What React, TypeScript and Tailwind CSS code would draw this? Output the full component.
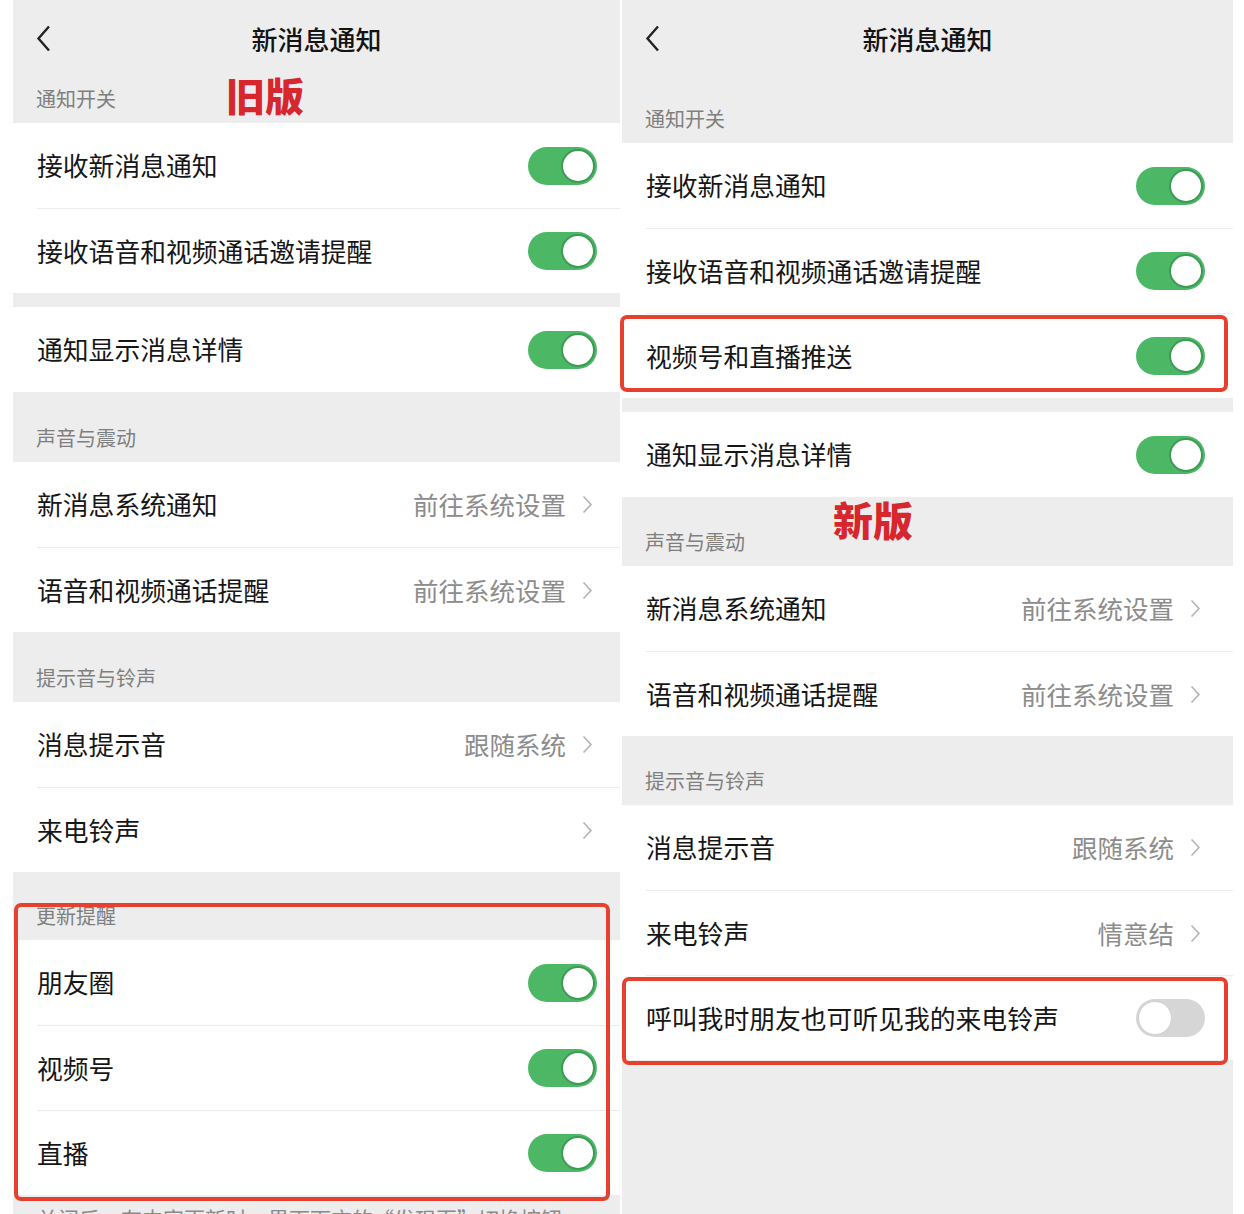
import React from "react";

type Item = {
  label: string;
  toggle?: boolean;
  on?: boolean;
  value?: string;
  arrow?: boolean;
};

type Section = {
  title?: string;
  bandClass: string;
  items: Item[];
};

const oldSections: Section[] = [
  {
    title: "通知开关",
    bandClass: "h-[43px]",
    items: [
      { label: "接收新消息通知", toggle: true, on: true },
      { label: "接收语音和视频通话邀请提醒", toggle: true, on: true },
    ],
  },
  {
    bandClass: "h-[14px]",
    items: [{ label: "通知显示消息详情", toggle: true, on: true }],
  },
  {
    title: "声音与震动",
    bandClass: "h-[70px]",
    items: [
      { label: "新消息系统通知", value: "前往系统设置", arrow: true },
      { label: "语音和视频通话提醒", value: "前往系统设置", arrow: true },
    ],
  },
  {
    title: "提示音与铃声",
    bandClass: "h-[70px]",
    items: [
      { label: "消息提示音", value: "跟随系统", arrow: true },
      { label: "来电铃声", arrow: true },
    ],
  },
  {
    title: "更新提醒",
    bandClass: "h-[68px]",
    items: [
      { label: "朋友圈", toggle: true, on: true },
      { label: "视频号", toggle: true, on: true },
      { label: "直播", toggle: true, on: true },
    ],
  },
];

const newSections: Section[] = [
  {
    title: "通知开关",
    bandClass: "h-[63px]",
    items: [
      { label: "接收新消息通知", toggle: true, on: true },
      { label: "接收语音和视频通话邀请提醒", toggle: true, on: true },
      { label: "视频号和直播推送", toggle: true, on: true },
    ],
  },
  {
    bandClass: "h-[14px]",
    items: [{ label: "通知显示消息详情", toggle: true, on: true }],
  },
  {
    title: "声音与震动",
    bandClass: "h-[69px]",
    items: [
      { label: "新消息系统通知", value: "前往系统设置", arrow: true },
      { label: "语音和视频通话提醒", value: "前往系统设置", arrow: true },
    ],
  },
  {
    title: "提示音与铃声",
    bandClass: "h-[69px]",
    items: [
      { label: "消息提示音", value: "跟随系统", arrow: true },
      { label: "来电铃声", value: "情意结", arrow: true },
      { label: "呼叫我时朋友也可听见我的来电铃声", toggle: true, on: false },
    ],
  },
];

function Toggle({ on }: { on: boolean }) {
  if (!on) {
    return (
      <div className="flex h-[38px] w-[69px] items-center rounded-full bg-[#d6d6d6] p-[2px]">
        <div className="h-[34px] w-[34px] rounded-full border border-[#d0d0d0] bg-white" />
      </div>
    );
  }
  return (
    <div className="flex h-[38px] w-[69px] items-center justify-end rounded-full bg-[#4cb865] p-[2px]">
      <div className="h-[34px] w-[34px] rounded-full border-2 border-[#3c9b54] bg-white" />
    </div>
  );
}

function Chevron() {
  return (
    <svg width="11" height="19" viewBox="0 0 11 19" className="mr-[4px] ml-[16px]">
      <polyline points="1.5,1.5 9,9.5 1.5,17.5" fill="none" stroke="#b3b3b3" strokeWidth="1.6" />
    </svg>
  );
}

function Row({ item, first, padRight }: { item: Item; first: boolean; padRight: string }) {
  return (
    <div className="pl-[24px]">
      <div
        className={`flex h-[85px] items-center justify-between ${padRight} ${
          first ? "" : "border-t border-[#ececec]"
        }`}
      >
        <span className="text-[25.8px] text-[#161616]">{item.label}</span>
        {item.toggle ? (
          <Toggle on={!!item.on} />
        ) : (
          <div className="flex items-center">
            {item.value && <span className="text-[25.5px] text-[#8c8c8c]">{item.value}</span>}
            {item.arrow && <Chevron />}
          </div>
        )}
      </div>
    </div>
  );
}

function Panel({
  sections,
  className,
  padRight,
  footer,
}: {
  sections: Section[];
  className: string;
  padRight: string;
  footer?: string;
}) {
  return (
    <div className={`min-h-[1214px] bg-[#ededed] ${className}`}>
      {/* 顶部导航 */}
      <div className="relative flex h-[80px] items-center justify-center pb-[4px]">
        <svg width="15" height="27" viewBox="0 0 15 27" className="absolute top-[25px] left-[23px]">
          <polyline points="13,1.5 2.5,13.5 13,25.5" fill="none" stroke="#222" strokeWidth="2.4" />
        </svg>
        <span className="text-[26px] font-medium text-[#141414]">新消息通知</span>
      </div>

      {sections.map((section, i) => (
        <div key={i}>
          <div className={`flex items-end px-[23px] pb-[10px] ${section.bandClass}`}>
            {section.title && (
              <span className="text-[20px] leading-[28px] text-[#7f7f7f]">{section.title}</span>
            )}
          </div>
          <div className="bg-white">
            {section.items.map((item, j) => (
              <Row key={j} item={item} first={j === 0} padRight={padRight} />
            ))}
          </div>
        </div>
      ))}

      {footer && (
        <div className="px-[24px] pt-[8px] text-[21px] leading-[30px] text-[#8a8a8a]">{footer}</div>
      )}
    </div>
  );
}

export default function App() {
  return (
    <div className="relative h-[1214px] w-[1244px] overflow-hidden bg-white font-['Noto_Sans_CJK_SC','Noto_Sans',sans-serif]">
      <div className="flex gap-[2px] pl-[13px]">
        <Panel
          sections={oldSections}
          className="w-[607px]"
          padRight="pr-[23px]"
          footer="关闭后，有内容更新时，界面下方的“发现页”切换按钮，即"
        />
        <Panel sections={newSections} className="w-[611px]" padRight="pr-[28px]" />
      </div>

      {/* 标注 */}
      <div className="absolute top-[75px] left-[226px] text-[39px] leading-none font-black text-[#d8262d]">
        旧版
      </div>
      <div className="absolute top-[499px] left-[833px] text-[40px] leading-none font-black text-[#d8262d]">
        新版
      </div>

      {/* 红框 */}
      <div className="absolute top-[903px] left-[14px] h-[298px] w-[596px] rounded-[7px] border-4 border-[#e8402e]" />
      <div className="absolute top-[315px] left-[620px] h-[77px] w-[608px] rounded-[7px] border-4 border-[#e8402e]" />
      <div className="absolute top-[977px] left-[622px] h-[88px] w-[606px] rounded-[7px] border-4 border-[#e8402e]" />
    </div>
  );
}
